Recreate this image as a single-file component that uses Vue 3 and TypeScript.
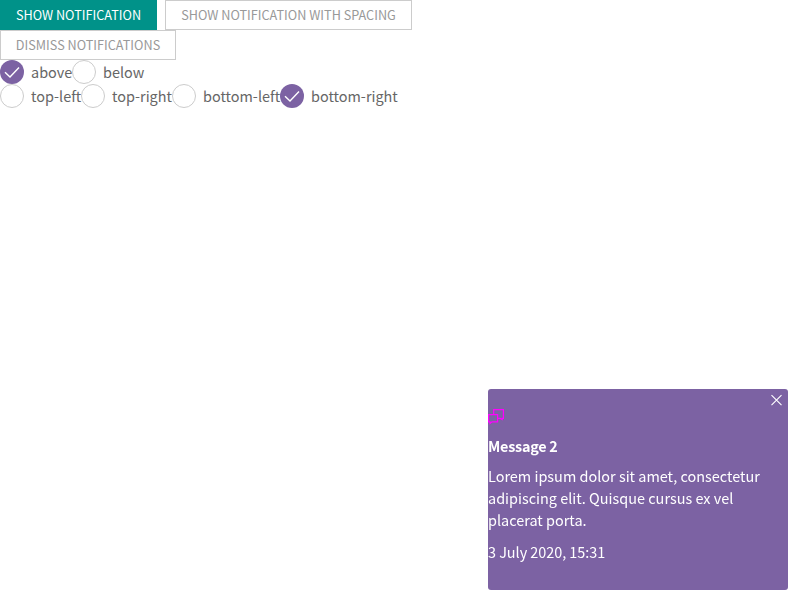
<script setup lang="ts">
import { ref } from 'vue'

const orders: string[] = ['above', 'below']
const positions: string[] = ['top-left', 'top-right', 'bottom-left', 'bottom-right']
const order = ref('above')
const position = ref('bottom-right')
const visible = ref(true)
</script>

<template>
  <main class="page">
    <div class="actions">
      <button class="btn primary" @click="visible = true">Show notification</button>
      <button class="btn spacing" @click="visible = true">Show notification with spacing</button>
      <button class="btn dismiss" @click="visible = false">Dismiss notifications</button>
    </div>
    <div class="options">
      <div v-for="item in orders" :key="item" class="option" :class="item" @click="order = item">
        <span class="radio" :class="{ checked: order === item }">
          <svg v-if="order === item" viewBox="0 0 24 24"><path d="M5 12.2 10 17 19 7.6" /></svg>
        </span>
        <span class="label">{{ item }}</span>
      </div>
    </div>
    <div class="options">
      <div v-for="item in positions" :key="item" class="option" :class="item" @click="position = item">
        <span class="radio" :class="{ checked: position === item }">
          <svg v-if="position === item" viewBox="0 0 24 24"><path d="M5 12.2 10 17 19 7.6" /></svg>
        </span>
        <span class="label">{{ item }}</span>
      </div>
    </div>

    <aside v-if="visible" class="notification">
      <button class="close" aria-label="Close" @click="visible = false">
        <svg viewBox="0 0 12 12"><path d="M1.500 1.200 11.500 11.200M11.500 1.200 1.500 11.200" /></svg>
      </button>
      <svg class="chat" viewBox="0 0 16 16">
        <path d="M5.700 5.500V.6H15.400V9.400H14.200V10.500L12.200 9.400H10" />
        <path d="M.6 5.600H9.600V12.900H4L2 14.500V12.900H.6z" />
      </svg>
      <h3 class="title">Message 2</h3>
      <p class="body">Lorem ipsum dolor sit amet, consectetur<br />adipiscing elit. Quisque cursus ex vel<br />placerat porta.</p>
      <p class="date">3 July 2020, 15:31</p>
    </aside>
  </main>
</template>

<style>
body {
  background: #fff;
}
</style>

<style scoped>
.page {
  font-family: 'Noto Sans CJK SC', 'Noto Sans', sans-serif;
  font-size: 14.45px;
  color: #666;
}
.actions {
  display: flex;
  flex-wrap: wrap;
  column-gap: 8px;
  width: 420px;
}
.btn {
  box-sizing: border-box;
  height: 30px;
  padding: 0;
  border: 1px solid #ccc;
  background: #fff;
  color: #999;
  font-family: inherit;
  font-size: 12.68px;
  line-height: 28px;
  text-transform: uppercase;
  white-space: nowrap;
}
.primary {
  width: 157px;
  border-color: #009289;
  background: #009289;
  color: #fff;
}
.spacing {
  width: 247px;
}
.dismiss {
  width: 176px;
}
.options {
  display: flex;
  height: 24px;
}
.option {
  display: flex;
  gap: 7px;
  line-height: 24px;
  white-space: nowrap;
}
.above {
  width: 72px;
}
.top-left {
  width: 81px;
}
.top-right {
  width: 91px;
}
.bottom-left {
  width: 108px;
}
.radio {
  box-sizing: border-box;
  flex: none;
  width: 24px;
  height: 24px;
  border: 1px solid #ccc;
  border-radius: 50%;
}
.checked {
  border: 0;
  background: #7c62a3;
}
svg {
  display: block;
  fill: none;
  stroke: #fff;
}
.radio svg {
  stroke-width: 1.4;
}
.notification {
  position: fixed;
  right: 12px;
  bottom: 10px;
  box-sizing: border-box;
  width: 300px;
  height: 201px;
  padding-top: 20px;
  border-radius: 3px;
  background: #7c62a3;
  color: #fff;
  line-height: 22px;
}
.close {
  position: absolute;
  top: 5px;
  right: 6px;
  width: 12px;
  height: 12px;
  padding: 0;
  border: 0;
  background: none;
}
.close svg {
  width: 12px;
  height: 12px;
  stroke-width: 1.1;
}
.chat {
  width: 16px;
  height: 16px;
}
.chat path {
  stroke: #f0f;
  stroke-width: 1.2;
}
.title {
  margin: 10px 0 8px;
  font-size: 14.4px;
  font-weight: 600;
  letter-spacing: -0.25px;
}
.body,
.date {
  margin: 0 0 10px;
}
.date {
  letter-spacing: -0.04px;
}
</style>
